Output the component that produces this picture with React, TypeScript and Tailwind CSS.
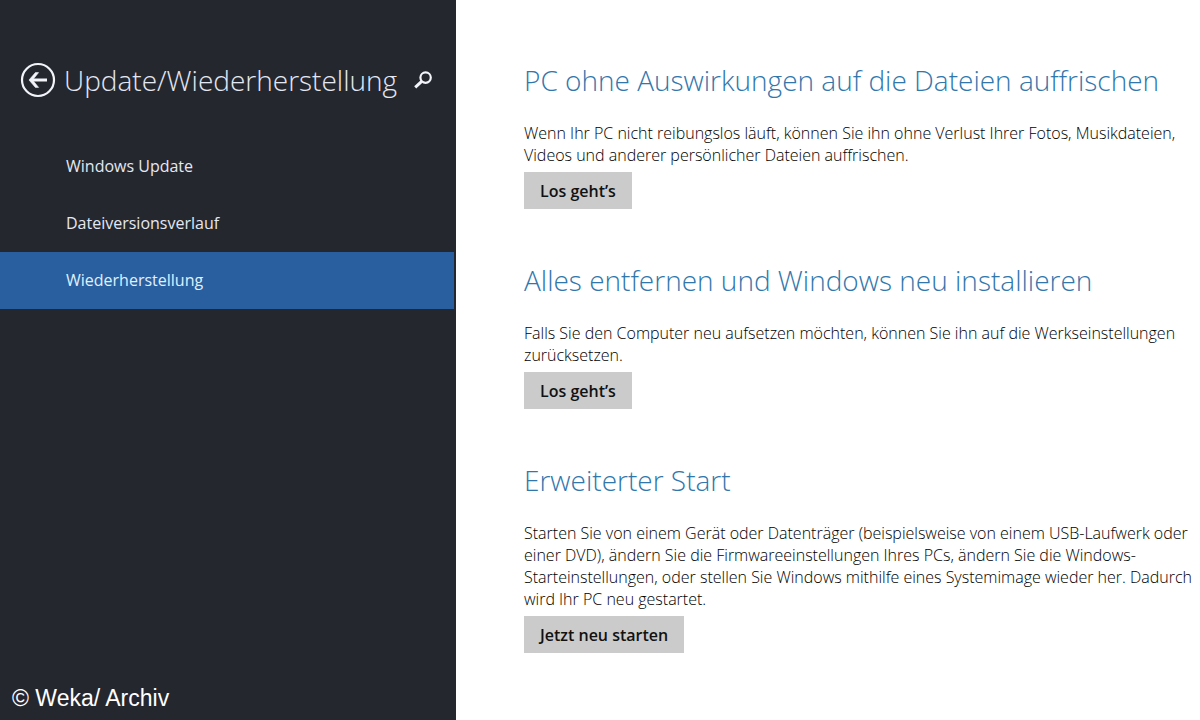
type NavItem = { label: string; active?: boolean };

type Section = { title: string; text: string; action: string };

const navItems: NavItem[] = [
  { label: "Windows Update" },
  { label: "Dateiversionsverlauf" },
  { label: "Wiederherstellung", active: true },
];

const sections: Section[] = [
  {
    title: "PC ohne Auswirkungen auf die Dateien auffrischen",
    text: "Wenn Ihr PC nicht reibungslos läuft, können Sie ihn ohne Verlust Ihrer Fotos, Musikdateien, Videos und anderer persönlicher Dateien auffrischen.",
    action: "Los geht’s",
  },
  {
    title: "Alles entfernen und Windows neu installieren",
    text: "Falls Sie den Computer neu aufsetzen möchten, können Sie ihn auf die Werkseinstellungen zurücksetzen.",
    action: "Los geht’s",
  },
  {
    title: "Erweiterter Start",
    text: "Starten Sie von einem Gerät oder Datenträger (beispielsweise von einem USB-Laufwerk oder einer DVD), ändern Sie die Firmwareeinstellungen Ihres PCs, ändern Sie die Windows-Starteinstellungen, oder stellen Sie Windows mithilfe eines Systemimage wieder her. Dadurch wird Ihr PC neu gestartet.",
    action: "Jetzt neu starten",
  },
];

function BackIcon() {
  return (
    <svg viewBox="0 0 36 36" className="size-9" fill="none" stroke="currentColor" aria-hidden="true">
      <circle cx="18" cy="18" r="16" strokeWidth="2.2" />
      <path d="M27 18H12" strokeWidth="3" />
      <path d="M18.6 10.6h-3.2L9 18l6.4 7.4h3.2L12.6 18z" fill="currentColor" strokeWidth="0.6" />
    </svg>
  );
}

function SearchIcon() {
  return (
    <svg viewBox="0 0 20 20" className="size-5" fill="none" stroke="currentColor" aria-hidden="true">
      <circle cx="12.6" cy="7.6" r="5.2" strokeWidth="2.2" />
      <path d="M8.7 11.3 2.2 17.3" strokeWidth="3" />
    </svg>
  );
}

function Sidebar() {
  return (
    <aside className="flex w-[38%] shrink-0 flex-col bg-[#25272f] pt-[60px] text-[#e4e8f2]">
      <header className="flex items-center pl-5">
        <button type="button" aria-label="Zurück" className="text-[#f2f4fa]">
          <BackIcon />
        </button>
        <h1 className="ml-2 text-[28px] leading-10 font-light whitespace-nowrap">Update/Wiederherstellung</h1>
        <button type="button" aria-label="Suchen" className="ml-4 text-[#f2f4fa]">
          <SearchIcon />
        </button>
      </header>

      <nav className="mt-[38px] mr-[2px]">
        {navItems.map((item) => (
          <a
            key={item.label}
            href="#"
            aria-current={item.active ? "page" : undefined}
            className={`flex h-[57px] items-center pb-[2px] pl-[66px] text-base leading-[22px] ${item.active ? "bg-[#2a5f9f] text-[#dff0ff]" : ""}`}
          >
            {item.label}
          </a>
        ))}
      </nav>

      <p className="mt-auto pb-2 pl-3 font-['Liberation_Sans',Arial,sans-serif] text-[23px] leading-7 text-white">
        © Weka/ Archiv
      </p>
    </aside>
  );
}

export default function App() {
  return (
    <div className="flex min-h-screen bg-white font-['Open_Sans','Segoe_UI',sans-serif]">
      <Sidebar />

      <main className="flex flex-1 flex-col gap-[51px] pt-[60px] pr-1 pl-[68px]">
        {sections.map((section) => (
          <section key={section.title}>
            <h2 className="text-[28px] leading-10 font-light text-[#3277ac]">{section.title}</h2>
            <p className="mt-[22px] text-base leading-[22px] font-light text-black">{section.text}</p>
            <button type="button" className="mt-[6px] h-[37px] bg-[#cbcbcb] px-4 text-base font-semibold text-[#111]">
              {section.action}
            </button>
          </section>
        ))}
      </main>
    </div>
  );
}
